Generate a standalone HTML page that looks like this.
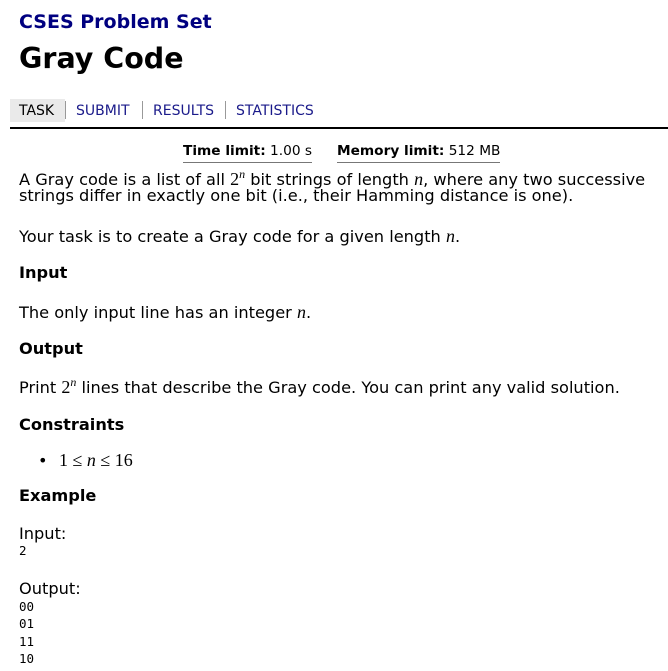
<!DOCTYPE html>
<html><head><style>
body{margin:0;background:#fff;font-family:"DejaVu Sans","Liberation Sans",sans-serif;color:#000;width:668px;height:671px;overflow:hidden;position:relative}
.a{position:absolute;white-space:nowrap;line-height:1}
.t{font-size:16.2px}
.b{font-weight:bold}
.m{font-family:"Liberation Serif",serif;font-style:italic;font-size:18px}
.n{font-family:"Liberation Serif",serif;font-size:18px}
.s{font-family:"Liberation Serif",serif;font-style:italic;font-size:12px;position:relative;top:-7px}
.mono{font-family:"DejaVu Sans Mono",monospace;font-size:12.5px}
</style></head><body>
<div class="a b" style="left:19px;top:13px;font-size:19px;color:#000080">CSES Problem Set</div>
<div class="a b" style="left:19px;top:45px;font-size:28.5px">Gray Code</div>
<div class="a" style="left:10px;top:99px;width:55px;height:23px;background:#eaeaea"></div>
<div class="a" style="left:19px;top:104px;font-size:14px">TASK</div>
<div class="a" style="left:65px;top:101px;width:1px;height:18px;background:#999"></div>
<div class="a" style="left:76px;top:104px;font-size:14px;color:#1a1a8a">SUBMIT</div>
<div class="a" style="left:142px;top:101px;width:1px;height:18px;background:#999"></div>
<div class="a" style="left:153px;top:104px;font-size:14px;color:#1a1a8a">RESULTS</div>
<div class="a" style="left:225px;top:101px;width:1px;height:18px;background:#999"></div>
<div class="a" style="left:236px;top:104px;font-size:14px;color:#1a1a8a">STATISTICS</div>
<div class="a" style="left:10px;top:127px;width:658px;height:2px;background:#000"></div>
<div class="a" style="left:183px;top:145px;font-size:13.7px;border-bottom:1px solid #777;padding-bottom:3px"><b>Time limit:</b> 1.00 s</div>
<div class="a" style="left:337px;top:145px;font-size:13.7px;border-bottom:1px solid #777;padding-bottom:3px"><b>Memory limit:</b> 512 MB</div>
<div class="a t" style="left:19px;top:170px">A Gray code is a list of all <span class="n">2</span><span class="s">n</span> bit strings of length <span class="m">n</span>, where any two successive</div>
<div class="a t" style="left:19px;top:188px">strings differ in exactly one bit (i.e., their Hamming distance is one).</div>
<div class="a t" style="left:19px;top:227px">Your task is to create a Gray code for a given length <span class="m">n</span>.</div>
<div class="a t b" style="left:19px;top:265px">Input</div>
<div class="a t" style="left:19px;top:303px">The only input line has an integer <span class="m">n</span>.</div>
<div class="a t b" style="left:19px;top:341px">Output</div>
<div class="a t" style="left:19px;top:378px">Print <span class="n">2</span><span class="s">n</span> lines that describe the Gray code. You can print any valid solution.</div>
<div class="a t b" style="left:19px;top:417px">Constraints</div>
<div class="a t" style="left:38px;top:453px">•</div>
<div class="a n" style="left:59px;top:451px">1 ≤ <i>n</i> ≤ 16</div>
<div class="a t b" style="left:19px;top:488px">Example</div>
<div class="a t" style="left:19px;top:526px">Input:</div>
<div class="a mono" style="left:19px;top:545px">2</div>
<div class="a t" style="left:19px;top:581px">Output:</div>
<div class="a mono" style="left:19px;top:598px;line-height:17.3px">00<br>01<br>11<br>10</div>
</body></html>
